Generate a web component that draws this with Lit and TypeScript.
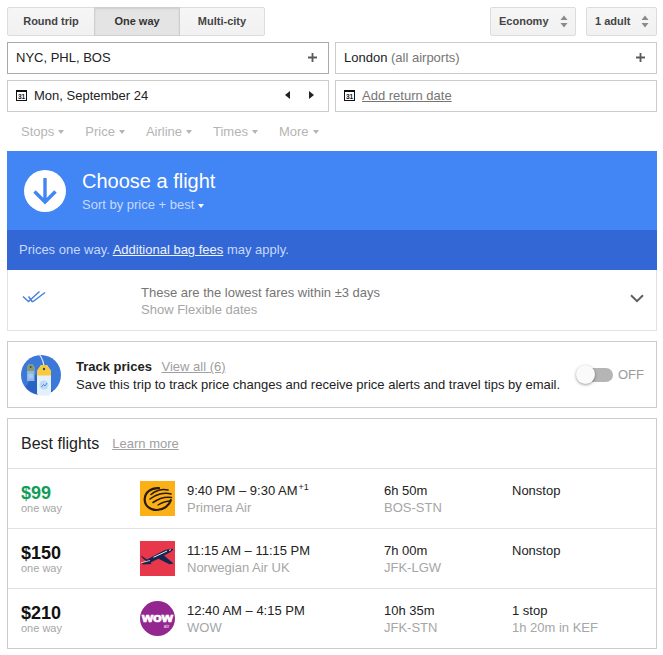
import { LitElement, css, html, svg } from "lit";
import { customElement } from "lit/decorators.js";

const calendar = html`<svg class="cal" width="11" height="11" viewBox="0 0 11 11">
  <rect x="0.5" y="0.5" width="10" height="10" fill="#fff" stroke="#111" />
  <rect x="0" y="0" width="11" height="2" fill="#111" />
  <text x="5.5" y="9" font-size="6.5" font-weight="700" text-anchor="middle" font-family="'Liberation Sans', sans-serif" fill="#111">31</text>
</svg>`;

const updown = html`<svg class="updown" width="8" height="13" viewBox="0 0 8 13">
  <path d="M4 0.5 L7.5 5 H0.5Z M4 12.5 L7.5 8 H0.5Z" fill="#8a8a8a" />
</svg>`;

const plus = html`<svg width="9" height="9" viewBox="0 0 9 9"><path d="M3.6 0h1.8v3.6H9v1.8H5.4V9H3.6V5.4H0V3.6h3.6z" fill="#5a5a5a" /></svg>`;

const primera = svg`<svg width="35" height="35" viewBox="0 0 35 35">
  <rect width="35" height="35" fill="#fbb017" />
  <g fill="none" stroke="#2a1a08" stroke-linecap="round">
    <path d="M19 7.2 C11 6.6 5 11.5 4.7 18 C4.5 24.5 10 29.3 17 29 C24 28.6 29.4 24.6 30.8 19" stroke-width="2.2" />
    <path d="M11 13.5 C15 9.5 22 7.5 28 9" stroke-width="1.6" />
    <path d="M10 18 C15.5 13.5 24 11 31 13" stroke-width="1.6" />
    <path d="M13 21.5 C18 18 25 15.5 31.5 16.5" stroke-width="1.6" />
    <path d="M18 24 C22 21.5 27 20 30.8 20" stroke-width="1.3" />
  </g>
</svg>`;

const norwegian = svg`<svg width="35" height="35" viewBox="0 0 35 35">
  <rect width="35" height="35" fill="#e8364b" />
  <path d="M1 14.5 L7 18.5 L22 10.5 C26 8.4 31 7.2 33 8 C33.5 9.4 30 11.6 26.5 13.2 L24 14.4 L33.5 22.5 L29.5 23.2 L18.5 17.8 L10.5 21.5 L11.5 23 L3 23.5 L1.5 22 L6.5 20.6 L2 16.5 Z" fill="#14264f" />
  <path d="M13.5 16.3 L27 10 M29 9.4 L31 8.7" stroke="#fff" stroke-width="0.9" fill="none" />
  <path d="M1 21.8 L10 19.5" stroke="#fff" stroke-width="0.7" />
</svg>`;

const wow = svg`<svg width="35" height="35" viewBox="0 0 35 35">
  <circle cx="17.5" cy="17.5" r="17.5" fill="#93278f" />
  <text x="17.5" y="21" font-size="12.5" font-weight="700" text-anchor="middle" font-family="'Liberation Sans', sans-serif" fill="#fff" stroke="#fff" stroke-width="0.7" textLength="31" lengthAdjust="spacingAndGlyphs">wow</text>
  <text x="26.5" y="27" font-size="4.5" font-weight="700" text-anchor="middle" font-family="'Liberation Sans', sans-serif" fill="#e6c7e5">air</text>
</svg>`;

const trackArt = svg`<svg width="40" height="42" viewBox="0 0 40 42">
  <circle cx="20" cy="21" r="20" fill="#3b78d8" />
  <path d="M4.5 33 L14 20 L32 37 A20 20 0 0 1 4.5 33Z" fill="#2a62c4" />
  <path d="M18 0 C21 4 23 8 23 14" fill="none" stroke="#e4eefa" stroke-width="1.2" />
  <path d="M6 13 L8 10 H11 L13.5 13 V27 H6Z" fill="#8fb7e6" />
  <path d="M6 13 L8 10 H11 L13.5 13 V17 H6Z" fill="#8a9a70" />
  <circle cx="9.7" cy="13" r="0.9" fill="#2a4a6a" />
  <circle cx="9.7" cy="22" r="2.6" fill="#a9c9ef" />
  <path d="M16 17 L20 11 H26 L30 17 V39 C30 40.5 29 41.5 27.5 41.5 H18.5 C17 41.5 16 40.5 16 39Z" fill="#e4f1fb" />
  <path d="M16 17 L20 11 H26 L30 17 V21.5 H16Z" fill="#f9cb3c" />
  <circle cx="23" cy="15" r="1.2" fill="#2a4a6a" />
  <circle cx="23" cy="31" r="4.5" fill="#bcd9f5" />
  <path d="M20.5 33 L22.5 30.5 L24 32 L26 29" fill="none" stroke="#4a80d0" stroke-width="0.9" />
</svg>`;

const flights = [
  { price: "$99", good: true, logo: primera, time: "9:40 PM – 9:30 AM", plus: "+1", airline: "Primera Air", dur: "6h 50m", route: "BOS-STN", stops: "Nonstop", via: "" },
  { price: "$150", good: false, logo: norwegian, time: "11:15 AM – 11:15 PM", plus: "", airline: "Norwegian Air UK", dur: "7h 00m", route: "JFK-LGW", stops: "Nonstop", via: "" },
  { price: "$210", good: false, logo: wow, time: "12:40 AM – 4:15 PM", plus: "", airline: "WOW", dur: "10h 35m", route: "JFK-STN", stops: "1 stop", via: "1h 20m in KEF" },
];

@customElement("app-root")
export class AppRoot extends LitElement {
  static styles = css`
    :host {
      display: block;
      width: 663px;
      height: 655px;
      overflow: hidden;
      box-sizing: border-box;
      padding: 7px 6px 0 7px;
      font-family: "Liberation Sans", Arial, sans-serif;
      font-size: 13px;
      color: #222;
      background: #fff;
    }
    .top {
      display: flex;
      justify-content: space-between;
      height: 29px;
    }
    .seg {
      display: flex;
    }
    .btn {
      box-sizing: border-box;
      height: 29px;
      display: flex;
      align-items: center;
      justify-content: center;
      padding-bottom: 1px;
      font-size: 11px;
      font-weight: 700;
      color: #444;
      background: linear-gradient(#f6f6f6, #f1f1f1);
      border: 1px solid #dcdcdc;
    }
    .seg .btn {
      width: 86px;
      margin-left: -1px;
    }
    .seg .btn:first-child {
      width: 88px;
      margin-left: 0;
      border-radius: 2px 0 0 2px;
    }
    .seg .btn:last-child {
      border-radius: 0 2px 2px 0;
    }
    .seg .btn.on {
      background: #e4e4e4;
      border-color: #cfcfcf;
      box-shadow: inset 0 1px 2px rgba(0, 0, 0, 0.1);
      color: #333;
      position: relative;
    }
    .selects {
      display: flex;
      gap: 10px;
    }
    .select {
      justify-content: space-between;
      padding: 0 7px 1px 8px;
      border-radius: 2px;
    }
    .select.cabin {
      width: 86px;
    }
    .select.pax {
      width: 71px;
    }
    .fields {
      display: grid;
      grid-template-columns: 322px 322px;
      column-gap: 6px;
      row-gap: 6px;
      margin-top: 6px;
    }
    .field {
      box-sizing: border-box;
      height: 32px;
      border: 1px solid #ccc;
      display: flex;
      align-items: center;
      justify-content: space-between;
      padding: 0 11px 2px 8px;
      color: #222;
    }
    .field.strong {
      border-color: #a9a9a9;
    }
    .field .muted {
      color: #757575;
    }
    .date {
      display: flex;
      align-items: center;
      gap: 7px;
    }
    .cal {
      display: block;
      margin-top: 1px;
    }
    .return {
      color: #757575;
      text-decoration: underline;
    }
    .arrows {
      display: flex;
      gap: 19px;
      margin-right: 3px;
    }
    .tri-l,
    .tri-r {
      width: 0;
      height: 0;
      border-top: 4px solid transparent;
      border-bottom: 4px solid transparent;
    }
    .tri-l {
      border-right: 5px solid #222;
    }
    .tri-r {
      border-left: 5px solid #222;
    }
    .filters {
      display: flex;
      gap: 21px;
      height: 39px;
      align-items: center;
      padding-left: 14px;
      color: #b4b4b4;
    }
    .filter {
      display: flex;
      align-items: center;
      gap: 4px;
    }
    .caret {
      width: 0;
      height: 0;
      border-left: 3.5px solid transparent;
      border-right: 3.5px solid transparent;
      border-top: 4px solid currentColor;
      margin-top: 1px;
    }
    .banner {
      box-sizing: border-box;
      height: 79px;
      background: #4285f4;
      color: #fff;
      display: flex;
      align-items: center;
      gap: 16px;
      padding-left: 17px;
    }
    .circle {
      width: 42px;
      height: 42px;
      border-radius: 50%;
      background: #fff;
      display: flex;
      align-items: center;
      justify-content: center;
    }
    .title-block {
      padding-top: 2px;
    }
    .banner h1 {
      margin: 0;
      font-size: 20px;
      font-weight: 400;
      line-height: 24px;
    }
    .sort {
      display: flex;
      align-items: center;
      gap: 4px;
      font-size: 13px;
      line-height: 18px;
      color: #c6dafc;
      margin-top: 3px;
    }
    .sort .caret {
      color: #fff;
    }
    .note {
      box-sizing: border-box;
      height: 40px;
      line-height: 39px;
      background: #3367d6;
      color: #c6dafc;
      padding-left: 12px;
    }
    .note a {
      color: #eef3fd;
      text-decoration: underline;
    }
    .flex-card {
      box-sizing: border-box;
      height: 61px;
      border: 1px solid #e2e2e2;
      border-top: none;
      display: flex;
      align-items: center;
      padding: 0 12px 0 14px;
    }
    .ticks {
      width: 119px;
      display: flex;
      margin-top: -6px;
    }
    .flex-text {
      flex: 1;
      line-height: 17px;
      color: #757575;
      padding-top: 1px;
    }
    .flex-text .sub {
      color: #a6a6a6;
    }
    .chevron {
      margin-top: -4px;
    }
    .track {
      box-sizing: border-box;
      height: 67px;
      margin-top: 10px;
      border: 1px solid #ccc;
      display: flex;
      align-items: center;
      padding: 0 12px 0 13px;
      gap: 15px;
    }
    .track-art {
      display: flex;
      flex: none;
    }
    .track-text {
      flex: 1;
      line-height: 18px;
      white-space: nowrap;
      padding-top: 3px;
    }
    .track-text b {
      font-weight: 700;
      margin-right: 6px;
    }
    .track-text a {
      color: #a0a0a0;
      text-decoration: underline;
    }
    .toggle {
      display: flex;
      align-items: center;
      position: relative;
      flex: none;
      width: 68px;
      color: #9a9a9a;
      justify-content: flex-end;
    }
    .track-bar {
      width: 30px;
      height: 14px;
      margin-right: 5px;
      border-radius: 7px;
      background: #b5b5b5;
    }
    .knob {
      position: absolute;
      left: 0;
      top: -2px;
      width: 19px;
      height: 19px;
      border-radius: 50%;
      background: #fafafa;
      box-shadow: 0 1px 3px rgba(0, 0, 0, 0.4);
    }
    .best {
      box-sizing: border-box;
      margin-top: 10px;
      border: 1px solid #ccc;
    }
    .best-head {
      box-sizing: border-box;
      height: 49px;
      display: flex;
      align-items: center;
      gap: 13px;
      padding-left: 13px;
    }
    .best-head h2 {
      margin: 0;
      font-size: 16px;
      font-weight: 400;
    }
    .best-head a {
      font-size: 13px;
      color: #a0a0a0;
      text-decoration: underline;
    }
    .row {
      box-sizing: border-box;
      height: 60px;
      border-top: 1px solid #e2e2e2;
      display: grid;
      grid-template-columns: 119px 47px 197px 128px 1fr;
      align-items: center;
      padding-left: 13px;
    }
    .price {
      font-size: 18px;
      font-weight: 700;
      line-height: 20px;
      color: #111;
    }
    .price.good {
      color: #0f9d58;
    }
    .small {
      font-size: 11px;
      line-height: 11px;
      color: #a6a6a6;
    }
    .logo {
      display: flex;
    }
    .cell {
      line-height: 17px;
      align-self: start;
      padding-top: 13px;
      white-space: nowrap;
    }
    .cell .sub {
      color: #a6a6a6;
    }
    sup {
      font-size: 9px;
      line-height: 0;
      vertical-align: 5px;
      margin-left: 1px;
    }
  `;

  render() {
    return html`
      <div class="top">
        <div class="seg">
          <div class="btn">Round trip</div>
          <div class="btn on">One way</div>
          <div class="btn">Multi-city</div>
        </div>
        <div class="selects">
          <div class="btn select cabin">Economy ${updown}</div>
          <div class="btn select pax">1 adult ${updown}</div>
        </div>
      </div>

      <div class="fields">
        <div class="field strong"><span>NYC, PHL, BOS</span>${plus}</div>
        <div class="field"><span>London <span class="muted">(all airports)</span></span>${plus}</div>
        <div class="field">
          <span class="date">${calendar}Mon, September 24</span>
          <span class="arrows"><span class="tri-l"></span><span class="tri-r"></span></span>
        </div>
        <div class="field"><span class="date">${calendar}<span class="return">Add return date</span></span></div>
      </div>

      <div class="filters">
        ${["Stops", "Price", "Airline", "Times", "More"].map(
          (f) => html`<span class="filter">${f}<span class="caret"></span></span>`
        )}
      </div>

      <div class="banner">
        <div class="circle">
          <svg width="26" height="28" viewBox="0 0 26 28">
            <path d="M13 1 V25 M2.5 14.5 L13 25 L23.5 14.5" fill="none" stroke="#4285f4" stroke-width="3.4" />
          </svg>
        </div>
        <div class="title-block">
          <h1>Choose a flight</h1>
          <div class="sort">Sort by price + best<span class="caret"></span></div>
        </div>
      </div>
      <div class="note">Prices one way. <a>Additional bag fees</a> may apply.</div>

      <div class="flex-card">
        <div class="ticks">
          <svg width="24" height="14" viewBox="0 0 24 14">
            <path d="M1 6.5 L6.5 11.5 L17.5 1.5 M10.5 12 L23 2.5 M6.5 6.5 L10.5 12" fill="none" stroke="#4a80d8" stroke-width="1.5" />
          </svg>
        </div>
        <div class="flex-text">
          <div>These are the lowest fares within ±3 days</div>
          <div class="sub">Show Flexible dates</div>
        </div>
        <svg class="chevron" width="14" height="9" viewBox="0 0 14 9">
          <path d="M1 1.2 L7 7.2 L13 1.2" fill="none" stroke="#5f5f5f" stroke-width="2" />
        </svg>
      </div>

      <div class="track">
        <div class="track-art">${trackArt}</div>
        <div class="track-text">
          <div><b>Track prices</b> <a>View all (6)</a></div>
          <div>Save this trip to track price changes and receive price alerts and travel tips by email.</div>
        </div>
        <div class="toggle"><span class="knob"></span><span class="track-bar"></span>OFF</div>
      </div>

      <div class="best">
        <div class="best-head"><h2>Best flights</h2><a>Learn more</a></div>
        ${flights.map(
          (f) => html`<div class="row">
            <div>
              <div class="price ${f.good ? "good" : ""}">${f.price}</div>
              <div class="small">one way</div>
            </div>
            <div class="logo">${f.logo}</div>
            <div class="cell">
              <div>${f.time}${f.plus ? html`<sup>${f.plus}</sup>` : ""}</div>
              <div class="sub">${f.airline}</div>
            </div>
            <div class="cell">
              <div>${f.dur}</div>
              <div class="sub">${f.route}</div>
            </div>
            <div class="cell">
              <div>${f.stops}</div>
              <div class="sub">${f.via}</div>
            </div>
          </div>`
        )}
      </div>
    `;
  }
}

declare global {
  interface HTMLElementTagNameMap {
    "app-root": AppRoot;
  }
}
